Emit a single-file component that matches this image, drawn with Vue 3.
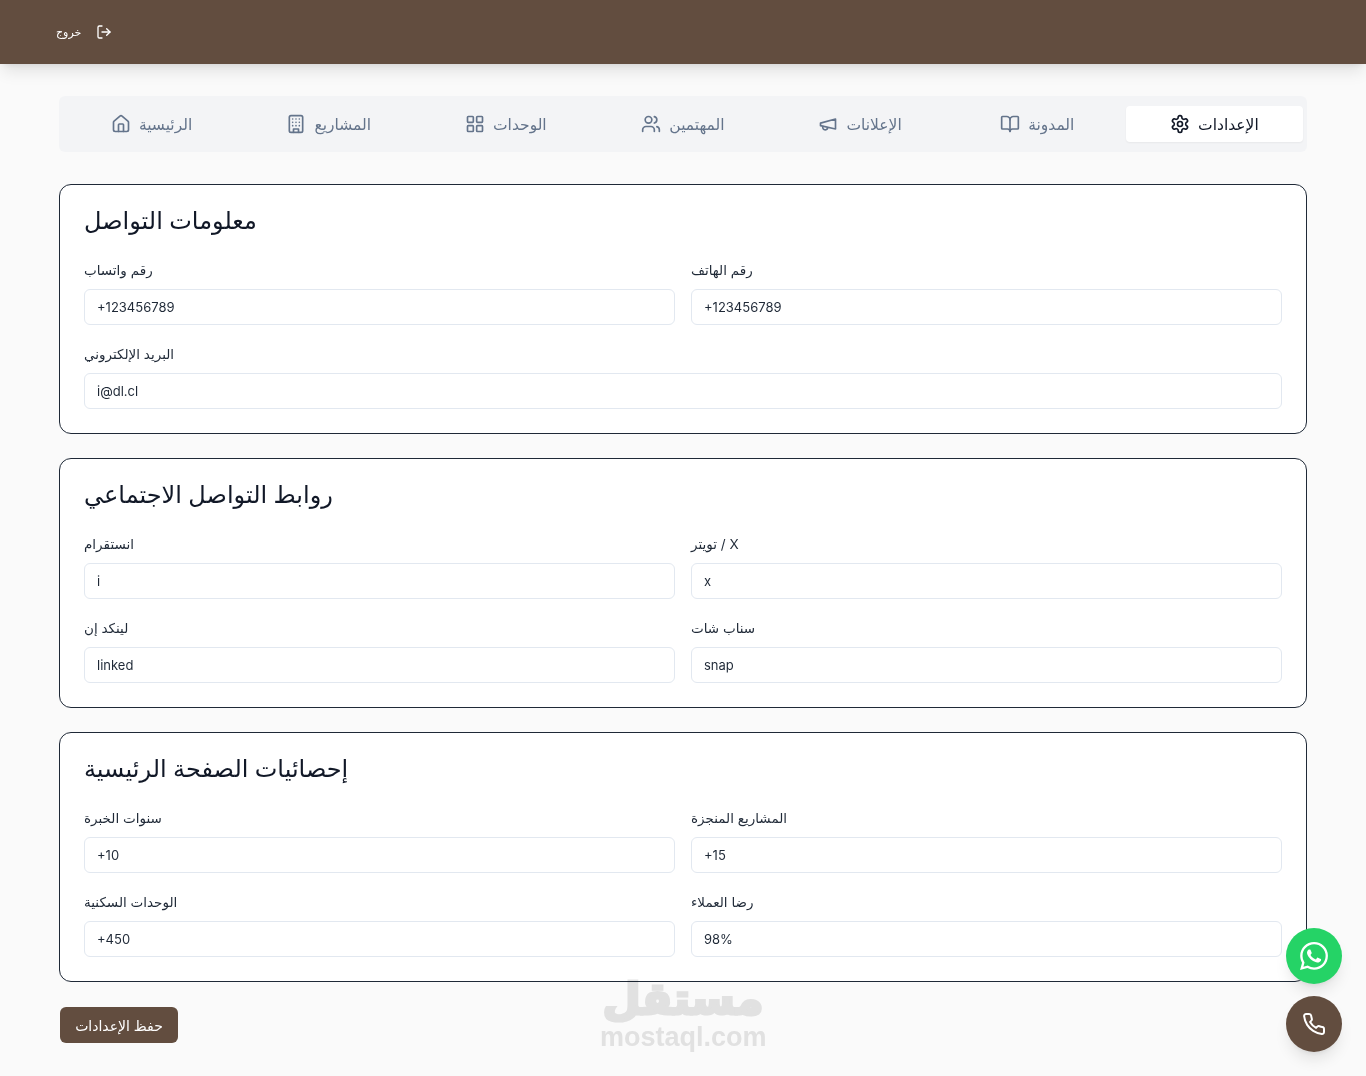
<script setup>
const tabs = [
  { label: 'الرئيسية', paths: ['M15 21v-8a1 1 0 0 0-1-1h-4a1 1 0 0 0-1 1v8', 'M3 10a2 2 0 0 1 .709-1.528l7-5.999a2 2 0 0 1 2.582 0l7 5.999A2 2 0 0 1 21 10v9a2 2 0 0 1-2 2H5a2 2 0 0 1-2-2z'] },
  { label: 'المشاريع', paths: ['M6 2h12a2 2 0 0 1 2 2v16a2 2 0 0 1-2 2H6a2 2 0 0 1-2-2V4a2 2 0 0 1 2-2z', 'M9 22v-4h6v4', 'M8 6h.01M16 6h.01M12 6h.01M12 10h.01M12 14h.01M16 10h.01M16 14h.01M8 10h.01M8 14h.01'] },
  { label: 'الوحدات', paths: ['M4 3h5a1 1 0 0 1 1 1v5a1 1 0 0 1-1 1H4a1 1 0 0 1-1-1V4a1 1 0 0 1 1-1z', 'M15 3h5a1 1 0 0 1 1 1v5a1 1 0 0 1-1 1h-5a1 1 0 0 1-1-1V4a1 1 0 0 1 1-1z', 'M15 14h5a1 1 0 0 1 1 1v5a1 1 0 0 1-1 1h-5a1 1 0 0 1-1-1v-5a1 1 0 0 1 1-1z', 'M4 14h5a1 1 0 0 1 1 1v5a1 1 0 0 1-1 1H4a1 1 0 0 1-1-1v-5a1 1 0 0 1 1-1z'] },
  { label: 'المهتمين', paths: ['M16 21v-2a4 4 0 0 0-4-4H6a4 4 0 0 0-4 4v2', 'M9 3a4 4 0 1 0 0 8 4 4 0 0 0 0-8z', 'M22 21v-2a4 4 0 0 0-3-3.87', 'M16 3.13a4 4 0 0 1 0 7.75'] },
  { label: 'الإعلانات', paths: ['m3 11 18-5v12L3 14v-3z', 'M11.6 16.8a3 3 0 1 1-5.8-1.6'] },
  { label: 'المدونة', paths: ['M12 7v14', 'M3 18a1 1 0 0 1-1-1V4a1 1 0 0 1 1-1h5a4 4 0 0 1 4 4 4 4 0 0 1 4-4h5a1 1 0 0 1 1 1v13a1 1 0 0 1-1 1h-6a3 3 0 0 0-3 3 3 3 0 0 0-3-3z'] },
  { label: 'الإعدادات', active: true, paths: ['M12.22 2h-.44a2 2 0 0 0-2 2v.18a2 2 0 0 1-1 1.73l-.43.25a2 2 0 0 1-2 0l-.15-.08a2 2 0 0 0-2.73.73l-.22.38a2 2 0 0 0 .73 2.73l.15.1a2 2 0 0 1 1 1.72v.51a2 2 0 0 1-1 1.74l-.15.09a2 2 0 0 0-.73 2.73l.22.38a2 2 0 0 0 2.73.73l.15-.08a2 2 0 0 1 2 0l.43.25a2 2 0 0 1 1 1.73V20a2 2 0 0 0 2 2h.44a2 2 0 0 0 2-2v-.18a2 2 0 0 1 1-1.73l.43-.25a2 2 0 0 1 2 0l.15.08a2 2 0 0 0 2.73-.73l.22-.39a2 2 0 0 0-.73-2.73l-.15-.08a2 2 0 0 1-1-1.74v-.5a2 2 0 0 1 1-1.74l.15-.09a2 2 0 0 0 .73-2.73l-.22-.38a2 2 0 0 0-2.73-.73l-.15.08a2 2 0 0 1-2 0l-.43-.25a2 2 0 0 1-1-1.73V4a2 2 0 0 0-2-2z', 'M12 9a3 3 0 1 0 0 6 3 3 0 0 0 0-6z'] },
]
const cards = [
  { title: 'معلومات التواصل', fields: [
    { label: 'رقم واتساب', value: '+123456789' },
    { label: 'رقم الهاتف', value: '+123456789' },
    { label: 'البريد الإلكتروني', value: 'i@dl.cl', wide: true },
  ] },
  { title: 'روابط التواصل الاجتماعي', fields: [
    { label: 'انستقرام', value: 'i' },
    { label: 'تويتر / X', value: 'x' },
    { label: 'لينكد إن', value: 'linked' },
    { label: 'سناب شات', value: 'snap' },
  ] },
  { title: 'إحصائيات الصفحة الرئيسية', fields: [
    { label: 'سنوات الخبرة', value: '+10' },
    { label: 'المشاريع المنجزة', value: '+15' },
    { label: 'الوحدات السكنية', value: '+450' },
    { label: 'رضا العملاء', value: '98%' },
  ] },
]
</script>

<template>
  <div class="page">
    <header class="topbar">
      <button class="logout">
        <span>خروج</span>
        <svg class="icon-16" viewBox="0 0 24 24"><path d="M9 21H5a2 2 0 0 1-2-2V5a2 2 0 0 1 2-2h4" /><path d="m16 17 5-5-5-5" /><path d="M21 12H9" /></svg>
      </button>
    </header>
    <main class="container">
      <nav class="tabs">
        <div v-for="t in tabs" :key="t.label" class="tab" :class="{ active: t.active }">
          <svg class="icon-20" viewBox="0 0 24 24"><path v-for="p in t.paths" :key="p" :d="p" /></svg>
          <span>{{ t.label }}</span>
        </div>
      </nav>
      <section v-for="c in cards" :key="c.title" class="card">
        <h2 class="card-title">{{ c.title }}</h2>
        <div class="grid">
          <label v-for="f in c.fields" :key="f.label" class="field" :class="{ wide: f.wide }">
            <span class="field-label">{{ f.label }}</span>
            <input class="input" :value="f.value" dir="ltr" readonly />
          </label>
        </div>
      </section>
      <button class="save">حفظ الإعدادات</button>
    </main>
    <div class="watermark">
      <div class="wm-ar">مستقل</div>
      <div class="wm-en">mostaql.com</div>
    </div>
    <a class="fab whatsapp">
      <svg viewBox="0 0 24 24" class="wa"><path d="M17.472 14.382c-.297-.149-1.758-.867-2.03-.967-.273-.099-.471-.148-.67.15-.197.297-.767.966-.94 1.164-.173.199-.347.223-.644.075-.297-.15-1.255-.463-2.39-1.475-.883-.788-1.48-1.761-1.653-2.059-.173-.297-.018-.458.13-.606.134-.133.298-.347.446-.52.149-.174.198-.298.298-.497.099-.198.05-.371-.025-.52-.075-.149-.669-1.612-.916-2.207-.242-.579-.487-.5-.669-.51-.173-.008-.371-.01-.57-.01-.198 0-.52.074-.792.372-.272.297-1.04 1.016-1.04 2.479 0 1.462 1.065 2.875 1.213 3.074.149.198 2.096 3.2 5.077 4.487.709.306 1.262.489 1.694.625.712.227 1.36.195 1.871.118.571-.085 1.758-.719 2.006-1.413.248-.694.248-1.289.173-1.413-.074-.124-.272-.198-.57-.347m-5.421 7.403h-.004a9.87 9.87 0 01-5.031-1.378l-.361-.214-3.741.982.998-3.648-.235-.374a9.86 9.86 0 01-1.51-5.26c.001-5.45 4.436-9.884 9.888-9.884 2.64 0 5.122 1.03 6.988 2.898a9.825 9.825 0 012.893 6.994c-.003 5.45-4.437 9.884-9.885 9.884m8.413-18.297A11.815 11.815 0 0012.05 0C5.495 0 .16 5.335.157 11.892c0 2.096.547 4.142 1.588 5.945L.057 24l6.305-1.654a11.882 11.882 0 005.683 1.448h.005c6.554 0 11.89-5.335 11.893-11.893a11.821 11.821 0 00-3.48-8.413z" /></svg>
    </a>
    <a class="fab phone">
      <svg viewBox="0 0 24 24" class="ph"><path d="M22 16.92v3a2 2 0 0 1-2.18 2 19.79 19.79 0 0 1-8.63-3.07 19.5 19.5 0 0 1-6-6 19.79 19.79 0 0 1-3.07-8.67A2 2 0 0 1 4.11 2h3a2 2 0 0 1 2 1.72 12.84 12.84 0 0 0 .7 2.81 2 2 0 0 1-.45 2.11L8.09 9.91a16 16 0 0 0 6 6l1.27-1.27a2 2 0 0 1 2.11-.45 12.84 12.84 0 0 0 2.81.7A2 2 0 0 1 22 16.92z" /></svg>
    </a>
  </div>
</template>

<style>
html, body { margin: 0; background: #fafafa; }
</style>

<style scoped>
.page {
  position: relative;
  min-height: 1076px;
  background: #fafafa;
  font-family: "Inter", "DejaVu Sans", sans-serif;
  color: #111827;
  overflow: hidden;
}
svg { fill: none; stroke: currentColor; stroke-width: 2; stroke-linecap: round; stroke-linejoin: round; flex: none; }
.icon-16 { width: 16px; height: 16px; }
.icon-20 { width: 20px; height: 20px; }
.topbar {
  height: 64px;
  background: #624d3f;
  box-shadow: 0 10px 15px -3px rgba(0,0,0,.1), 0 4px 6px -4px rgba(0,0,0,.1);
  display: flex;
  align-items: center;
  padding-left: 56px;
}
.logout {
  display: flex;
  align-items: center;
  gap: 15px;
  background: none;
  border: 0;
  padding: 0;
  color: #fff;
  font: inherit;
  font-size: 11px;
}
.container {
  width: 1248px;
  margin: 32px auto 0;
  display: flex;
  flex-direction: column;
  gap: 24px;
  align-items: stretch;
}
.tabs {
  display: grid;
  grid-template-columns: repeat(7, 1fr);
  align-items: center;
  height: 56px;
  padding: 0 4px;
  margin-bottom: 8px;
  box-sizing: border-box;
  background: #f3f4f6;
  border-radius: 6px;
  color: #64748b;
}
.tab {
  height: 36px;
  display: flex;
  align-items: center;
  justify-content: center;
  gap: 8px;
  border-radius: 4px;
  font-size: 15.5px;
}
.tab.active {
  background: #fff;
  color: #111827;
  box-shadow: 0 1px 2px rgba(0,0,0,.05);
}
.card {
  background: #fff;
  border: 1px solid #1f2937;
  border-radius: 12px;
  padding: 24px;
  height: 250px;
  box-sizing: border-box;
}
.card-title {
  margin: 0 0 27px;
  font-size: 24px;
  line-height: 24px;
  font-weight: 500;
  text-align: left;
}
.grid {
  display: grid;
  grid-template-columns: 1fr 1fr;
  gap: 19px 16px;
}
.field { display: flex; flex-direction: column; gap: 9px; align-items: flex-start; min-width: 0; }
.field.wide { grid-column: 1 / -1; }
.field-label { font-size: 13.5px; line-height: 20px; color: #1f2937; }
.input {
  width: 100%;
  height: 36px;
  box-sizing: border-box;
  border: 1px solid #e2e8f0;
  border-radius: 6px;
  background: #fff;
  padding: 0 12px;
  font: inherit;
  font-size: 13px;
  color: #1f2937;
  outline: none;
}
.save {
  align-self: flex-start;
  margin: 1px 0 0 1px;
  width: 118px;
  height: 36px;
  border: 0;
  border-radius: 6px;
  background: #624d3f;
  color: #fff;
  font: inherit;
  font-size: 14px;
}
.watermark {
  position: absolute;
  left: 600px;
  top: 978px;
  width: 166px;
  text-align: center;
  color: #e6e6e6;
  mix-blend-mode: multiply;
  pointer-events: none;
  font-weight: 700;
}
.wm-ar { font-size: 44px; line-height: 40px; -webkit-text-stroke: 3px #e6e6e6; }
.wm-en { margin-top: 4px; font-family: "Liberation Sans", sans-serif; font-size: 27px; line-height: 30px; }
.fab {
  position: fixed;
  right: 24px;
  width: 56px;
  height: 56px;
  border-radius: 50%;
  display: flex;
  align-items: center;
  justify-content: center;
  color: #fff;
  box-shadow: 0 10px 15px -3px rgba(0,0,0,.1), 0 4px 6px -4px rgba(0,0,0,.1);
}
.whatsapp { top: 928px; background: #25d366; }
.phone { top: 996px; background: #624d3f; }
.wa { width: 28px; height: 28px; fill: currentColor; stroke: none; }
.ph { width: 24px; height: 24px; }
</style>
